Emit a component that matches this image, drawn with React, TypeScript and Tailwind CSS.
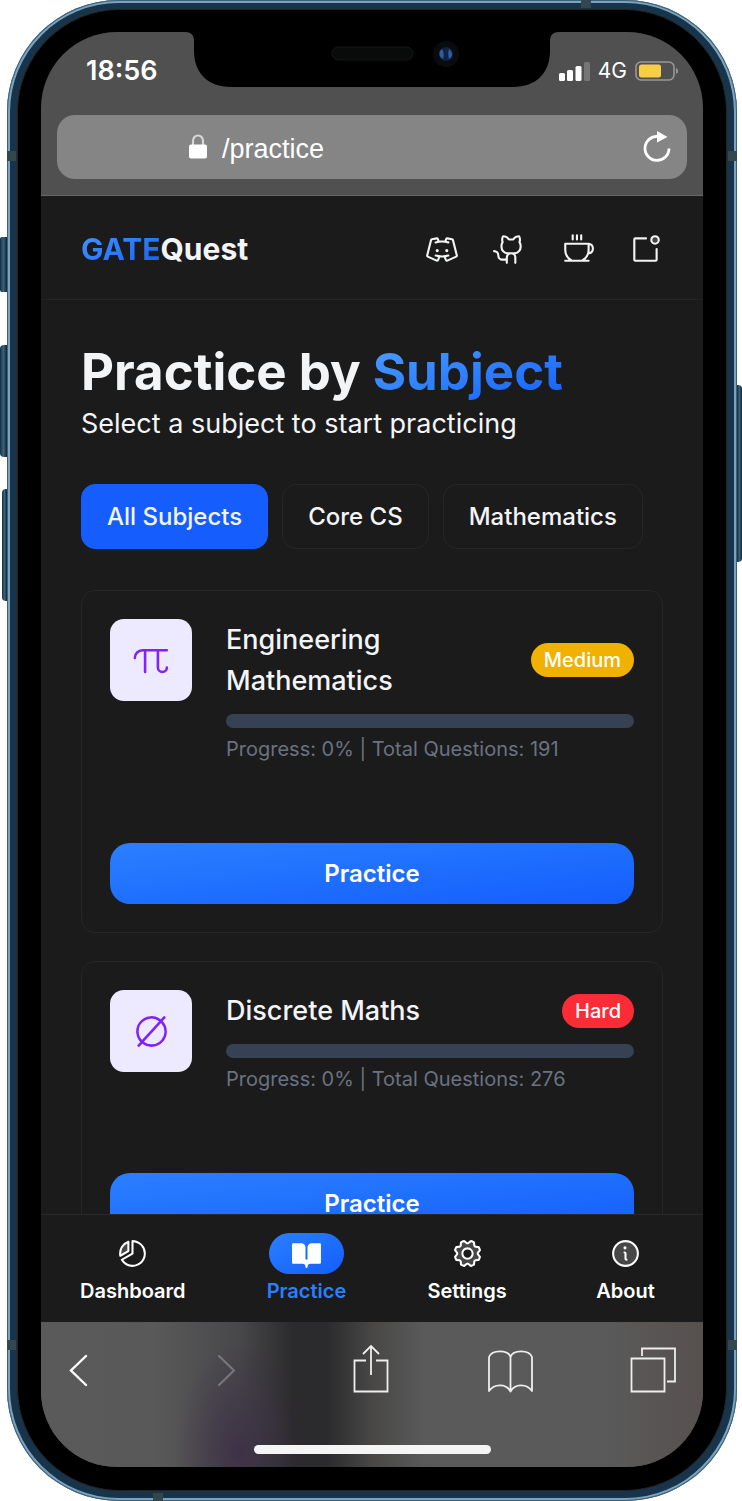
import React, { useState } from "react";
import {
  PiBookOpenFill,
  PiChartPieSliceDuotone,
  PiCoffee,
  PiDiscordLogo,
  PiEmpty,
  PiGearDuotone,
  PiGithubLogo,
  PiInfoDuotone,
  PiNotificationDuotone,
  PiPi,
} from "react-icons/pi";

type Level = "Medium" | "Hard";

interface Subject {
  name: string;
  icon: React.ReactNode;
  level: Level;
  progress: number;
  total: number;
}

const levelColor: Record<Level, string> = {
  Medium: "bg-[#f0b100]",
  Hard: "bg-[#fb2c36]",
};

const subjects: Subject[] = [
  { name: "Engineering Mathematics", icon: <PiPi />, level: "Medium", progress: 0, total: 191 },
  { name: "Discrete Maths", icon: <PiEmpty />, level: "Hard", progress: 0, total: 276 },
];

const filters = ["All Subjects", "Core CS", "Mathematics"];

function StatusBar() {
  return (
    <div className="flex h-[83px] shrink-0 items-start justify-between pt-[23px] pr-6 pl-[45px] text-white">
      <span className="text-[27px] leading-8 font-semibold">18:56</span>
      <div className="flex h-8 items-center gap-2">
        <svg width="32" height="20" viewBox="0 0 32 20" fill="#fff" aria-hidden="true">
          <rect x="1" y="12" width="6" height="8" rx="1.5" />
          <rect x="9" y="9" width="6" height="11" rx="1.5" />
          <rect x="17.500" y="5" width="6" height="15" rx="1.500" />
          <rect x="26" y="1" width="6" height="19" rx="1.500" opacity=".22" />
        </svg>
        <span className="text-[21px] leading-8">4G</span>
        <svg width="44" height="20" viewBox="0 0 44 20" aria-hidden="true">
          <rect x="1" y="1" width="38" height="18" rx="5" fill="none" stroke="#989898" strokeWidth="1.600" />
          <rect x="4" y="3.500" width="22" height="13" rx="2.500" fill="#f7ce46" />
          <path d="M41 7c2.700.7 2.700 5.300 0 6z" fill="#989898" />
        </svg>
      </div>
    </div>
  );
}

function AddressBar() {
  return (
    <div className="shrink-0 border-b border-[#666] px-4 pb-4">
      <div className="flex h-16 items-center rounded-[18px] bg-[#858585] pr-4 pl-[131px] text-white">
        <label htmlFor="address" aria-label="Address">
          <svg width="20" height="26" viewBox="0 0 20 26" aria-hidden="true">
            <path d="M5 12V7a5 5.500 0 0 1 10 0v5" fill="none" stroke="#d6d6d6" strokeWidth="2.200" />
            <rect x="1" y="10.500" width="18" height="14" rx="2" fill="#fff" />
          </svg>
        </label>
        <input
          id="address"
          defaultValue="/practice"
          className="ml-[14px] w-0 min-w-0 flex-1 bg-transparent pt-1 font-['Liberation_Sans',sans-serif] text-[27px] leading-9 outline-none"
        />
        <button type="button" aria-label="Reload">
          <svg width="28" height="32" viewBox="0 0 28 32" fill="none" aria-hidden="true">
            <path d="M15 5.500A12 12 0 1 0 26 17.500" stroke="#fff" strokeWidth="2.800" />
            <path d="M14 0v11.500L24.500 6z" fill="#fff" />
          </svg>
        </button>
      </div>
    </div>
  );
}

function AppHeader() {
  return (
    <header className="flex h-[104px] shrink-0 items-center justify-between border-b border-[#242528] px-10 pt-[2px]">
      <a href="#home" className="text-[30px] leading-9 font-bold text-gray-100">
        <span className="bg-linear-to-br from-[#4596ff] to-[#155dfc] bg-clip-text text-transparent">GATE</span>
        Quest
      </a>
      <nav className="flex items-center gap-[34px] text-[34px] text-gray-100">
        <a href="#discord" aria-label="Discord"><PiDiscordLogo /></a>
        <a href="#github" aria-label="GitHub"><PiGithubLogo /></a>
        <a href="#coffee" aria-label="Buy a coffee"><PiCoffee /></a>
        <a href="#updates" aria-label="Updates"><PiNotificationDuotone /></a>
      </nav>
    </header>
  );
}

function SubjectCard({ subject }: { subject: Subject }) {
  return (
    <article className="rounded-[14px] border border-[#252629] p-7">
      <div className="flex items-start gap-[34px]">
        <div className="flex size-[82px] shrink-0 items-center justify-center rounded-[14px] bg-[#ede9fe] text-[41px] text-[#7f22fe]">
          {subject.icon}
        </div>
        <div className="min-w-0 flex-1">
          <div className="flex items-center justify-between gap-4">
            <h2 className="max-w-[240px] text-[27px] leading-[41px] font-medium text-gray-100">{subject.name}</h2>
            <span className={`rounded-full px-[13px] text-[20px] leading-[34px] font-medium text-white ${levelColor[subject.level]}`}>
              {subject.level}
            </span>
          </div>
          <div className="mt-[13px] h-[14px] overflow-hidden rounded-full bg-[#364153]">
            <div className="h-full bg-[#155dfc]" style={{ width: `${subject.progress}%` }} />
          </div>
          <p className="mt-[7px] text-[20px] leading-7 text-[#6a7282]">
            Progress: {subject.progress}% | Total Questions: {subject.total}
          </p>
        </div>
      </div>
      <button
        type="button"
        className="mt-20 h-[61px] w-full rounded-[20px] bg-linear-to-br from-[#2b7fff] to-[#155dfc] text-[24px] font-semibold text-white"
      >
        Practice
      </button>
    </article>
  );
}

function TabBar() {
  const item = "flex flex-col items-center gap-[3px] text-[20px] leading-7 font-semibold";
  const icon = "flex h-[41px] w-[75px] items-center justify-center rounded-full text-[33px]";
  return (
    <nav className="flex h-[108px] shrink-0 items-start justify-between border-t border-[#28292d] bg-[#1b1b1b] pt-[18px] pr-10 pl-[39px] text-white">
      <a href="#dashboard" className={item}>
        <span className={icon}><PiChartPieSliceDuotone /></span>
        Dashboard
      </a>
      <a href="#practice" aria-current="page" className={`${item} text-[#2b7fff]`}>
        <span className={`${icon} bg-linear-to-br from-[#2b7fff] to-[#155dfc] text-white`}><PiBookOpenFill /></span>
        Practice
      </a>
      <a href="#settings" className={item}>
        <span className={icon}><PiGearDuotone /></span>
        Settings
      </a>
      <a href="#about" className={item}>
        <span className={icon}><PiInfoDuotone /></span>
        About
      </a>
    </nav>
  );
}

function BrowserToolbar() {
  const button = "flex w-[46px] justify-center";
  return (
    <div className="flex h-[145px] shrink-0 flex-col items-center justify-between bg-[radial-gradient(ellipse_65px_110px_at_30%_90%,#3b2d45cc_0%,#3b2d4500_100%),linear-gradient(90deg,#5a5a5a_0%,#595959_17%,#48474a_30%,#2b2a2c_38%,#2b2a2c_43%,#484746_50%,#5a5a5a_58%,#5a5a5a_85%,#57504e_100%)] pt-[22px] pb-[13px]">
      <div className="flex w-full items-center justify-between pr-[27px] pl-[15px]">
        <button type="button" aria-label="Back" className={button}>
          <svg width="24" height="50" viewBox="0 0 24 50" fill="none" stroke="#fff" strokeWidth="2.400" strokeLinecap="round">
            <path d="M19 12 4 26.500 19 41" />
          </svg>
        </button>
        <button type="button" aria-label="Forward" className={button}>
          <svg width="24" height="50" viewBox="0 0 24 50" fill="none" stroke="#77767a" strokeWidth="2.200" strokeLinecap="round">
            <path d="M8 12 23 26.500 8 41" />
          </svg>
        </button>
        <button type="button" aria-label="Share" className={button}>
          <svg width="46" height="50" viewBox="0 0 46 50" fill="none" stroke="#eee" strokeWidth="1.800">
            <path d="M23 16.500H11.500v31h33v-31H33M28 31V2M20 10l8-8 8 8" />
          </svg>
        </button>
        <button type="button" aria-label="Bookmarks" className={button}>
          <svg width="46" height="50" viewBox="-2 0 46 50" fill="none" stroke="#eee" strokeWidth="1.800" strokeLinejoin="round">
            <path d="M21.500 13C19 5.500 3 5.500 0 13v34C5 40 17 39 21.500 47.500 26 39 38 40 43 47V13C40 5.500 24 5.500 21.500 13zV47.500" />
          </svg>
        </button>
        <button type="button" aria-label="Tabs" className={button}>
          <svg width="46" height="50" viewBox="0 0 46 50" fill="none" stroke="#eee" strokeWidth="1.800">
            <path d="M1.500 14.500h33v33h-33zM12 12V4.500h33v33h-8" />
          </svg>
        </button>
      </div>
      <div className="h-[9px] w-[237px] rounded-full bg-[#f5f5f5]" />
    </div>
  );
}

function Notch() {
  return (
    <svg className="absolute top-0 left-1/2 -translate-x-1/2" width="374" height="56" viewBox="0 0 374 56" aria-hidden="true">
      <path d="M0 0C6 0 9 3 9 9v10c0 22 14 36 37 36h282c23 0 37-14 37-36V9c0-6 3-9 9-9z" fill="#000" />
      <rect x="147" y="15" width="81" height="13" rx="6.500" fill="#090a0a" stroke="#161717" />
      <circle cx="261" cy="22" r="13" fill="#0a0b0d" />
      <circle cx="261" cy="22" r="7" fill="#0f2345" />
      <path d="M257 17c-4 3-3 8 1 10 1-3 1-7-1-10zM264 17c4 3 4 8 0 10-1-3-1-7 0-10z" fill="#2f5f9c" />
    </svg>
  );
}

function Hardware() {
  const key = "absolute bg-linear-to-r from-[#16303f] via-[#3b627c] to-[#10242f]";
  const band = "absolute bg-[#33474f]";
  return (
    <div aria-hidden="true">
      <div className={`${key} top-[237px] left-0 h-[55px] w-[7px] rounded-l-xs`} />
      <div className={`${key} top-[345px] left-0 h-[112px] w-[7px] rounded-l-sm`} />
      <div className={`${key} top-[489px] left-[2px] h-[112px] w-[5px] rounded-l-sm`} />
      <div className={`${key} top-[385px] right-0 h-[177px] w-[5px] rounded-r-sm`} />
      <div className={`${band} top-[151px] left-[7px] h-[10px] w-[9px]`} />
      <div className={`${band} top-[151px] right-[5px] h-[10px] w-[9px]`} />
      <div className={`${band} bottom-[151px] left-[7px] h-[10px] w-[9px]`} />
      <div className={`${band} right-[5px] bottom-[151px] h-[10px] w-[9px]`} />
      <div className={`${band} top-0 right-[151px] h-2 w-[10px]`} />
      <div className={`${band} bottom-0 left-[153px] h-2 w-[10px]`} />
    </div>
  );
}

export default function App() {
  const [active, setActive] = useState(filters[0]);
  return (
    <div className="relative h-screen min-h-[900px] bg-white pr-[5px] pl-[7px] font-['Inter','Noto_Sans',sans-serif]">
      <div className="h-full rounded-[112px] bg-[#17344a] p-[10px] pt-[9px] shadow-[inset_0_0_0_1px_#3c6078,inset_0_0_0_3px_#7ba2bf]">
        <div className="h-full rounded-[103px] border border-[#25221f] bg-black px-[23px] pt-[22px] pb-[23px]">
          <div className="relative flex h-full flex-col overflow-hidden rounded-[76px] bg-[#505050]">
            <Notch />
            <StatusBar />
            <AddressBar />
            <div className="flex min-h-0 flex-1 flex-col bg-[#1b1b1b]">
              <AppHeader />
              <main className="min-h-0 flex-1 overflow-y-auto px-10 pt-[41px] pb-7 [scrollbar-width:none]">
                <h1 className="text-[51px] leading-[62px] font-bold whitespace-nowrap text-gray-100">
                  Practice by{" "}
                  <span className="bg-linear-to-br from-[#4e9fff] to-[#155dfc] bg-clip-text text-transparent">Subject</span>
                </h1>
                <p className="text-[27px] leading-[41px] text-gray-100">Select a subject to start practicing</p>
                <div className="mt-10 flex gap-[14px]">
                  {filters.map((f) => (
                    <button
                      key={f}
                      type="button"
                      onClick={() => setActive(f)}
                      className={`h-[65px] rounded-[14px] border px-[25px] text-[24px] font-medium whitespace-nowrap text-gray-100 ${
                        f === active ? "border-[#155dfc] bg-[#155dfc]" : "border-[#252629]"
                      }`}
                    >
                      {f}
                    </button>
                  ))}
                </div>
                <div className="mt-[41px] flex flex-col gap-7">
                  {subjects.map((s) => (
                    <SubjectCard key={s.name} subject={s} />
                  ))}
                </div>
              </main>
              <TabBar />
            </div>
            <BrowserToolbar />
          </div>
        </div>
      </div>
      <Hardware />
    </div>
  );
}
